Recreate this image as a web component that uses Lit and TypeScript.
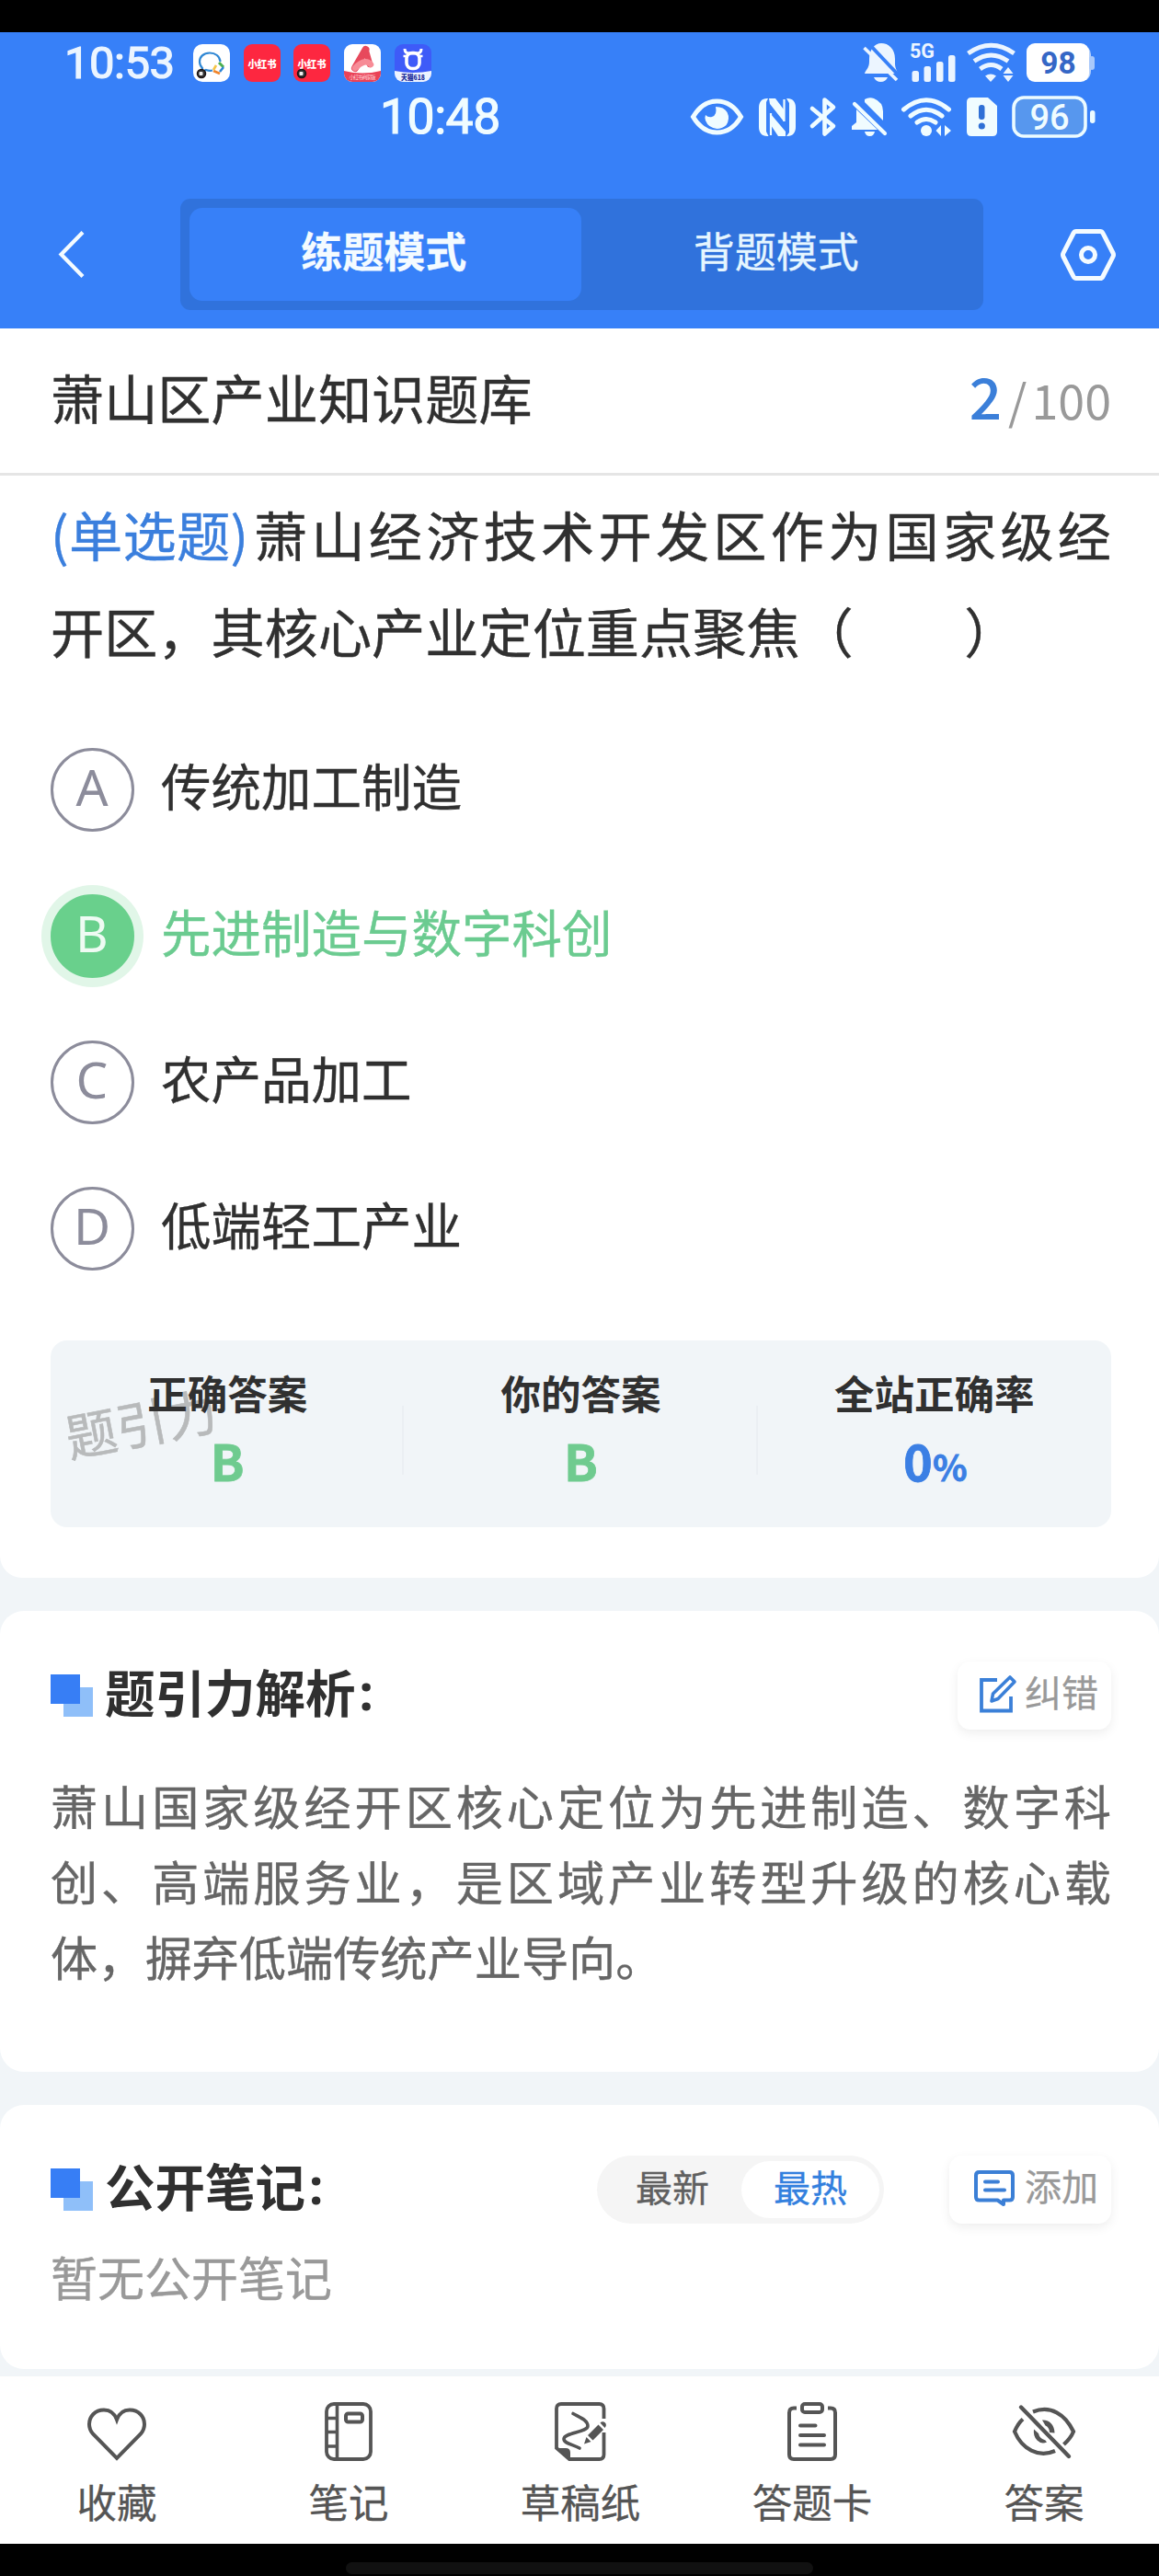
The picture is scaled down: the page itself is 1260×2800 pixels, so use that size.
import { LitElement, html, css, svg, TemplateResult } from "lit";
import { customElement, property } from "lit/decorators.js";
import { classMap } from "lit/directives/class-map.js";

const icon = (w: number, h: number, body: unknown) =>
  html`<svg width=${w} height=${h} viewBox="0 0 ${w} ${h}" fill="none">${body}</svg>`;

const BLUE = "#3780f8";

const bell = icon(39, 42, svg`
  <path d="M7 17C7 7 13 0 20 0C28 0 35 6 35 17V22C35 27 37 29 38 33H2C3 29 7 27 7 20Z" fill="#ecf5ff"/>
  <path d="M12 37H27C25.500 40.500 23 42 19.500 42C16 42 13.500 40.500 12 37Z" fill="#ecf5ff"/>
  <path d="M6 0L41 37" stroke=${BLUE} stroke-width="4"/>
  <path d="M1.500 5L37 40" stroke="#ecf5ff" stroke-width="3.600"/>`);

const signal = icon(50, 42, svg`
  <text x="0" y="16" font-family="Roboto, sans-serif" font-weight="700" font-size="22" textLength="27" lengthAdjust="spacingAndGlyphs" fill="#ecf5ff">5G</text>
  <g fill="#ecf5ff"><rect x="2.500" y="30" width="7.500" height="12" rx="2.500"/><rect x="15.500" y="25" width="7.500" height="17" rx="2.500"/><rect x="29" y="20" width="7.500" height="22" rx="2.500"/><rect x="42" y="13" width="7.500" height="29" rx="2.500"/></g>`);

const wifi = icon(53, 42, svg`
  <g stroke="#ecf5ff" stroke-width="4.800"><path d="M1.500 11Q26.500 -6.500 51.500 11"/><path d="M8 19.500Q26.500 6.500 45 19.500"/><path d="M14.500 28Q26.500 19 38 28"/></g>
  <path d="M20 35.500Q26 31.500 32 35.500L26 42Z M45 26L50.500 33H39.500Z M39.500 35H50.500L45 42Z" fill="#ecf5ff"/>`);

const battery98 = icon(74, 42, svg`
  <path d="M67 5Q70 8 70 12V30Q70 36 65 40Z" fill="#b5d1fb"/><rect x="68" y="14" width="6" height="15" rx="3" fill="#a9c9fb"/>
  <rect width="68" height="42" rx="9" fill="#fff"/>
  <text x="34.500" y="33" text-anchor="middle" font-family="Roboto, sans-serif" font-weight="700" font-size="33.500" fill="#3567c6">98</text>`);

const eyeStatus = icon(57, 40, svg`
  <path d="M2.500 20C9 9 18 3 28.500 3S48 9 54.500 20C48 31 39 37 28.500 37S9 31 2.500 20Z" stroke="#f0fcff" stroke-width="5"/>
  <path d="M27 9Q36 9 39.500 15Q43 22 38.500 29Q34 33 28.500 33Q19 32 16 24Q15 20 16 18Q19 21 23 20Q29 18 27 9Z" fill="#f0fcff"/>`);

const nfc = icon(40, 41, svg`
  <path d="M9 0C3 0 0 4 0 10V31C0 37 3 41 9 41H10.500L8 36V4L10 0Z M31 0H30L33 5V37L30 41H31C37 41 40 37 40 31V10C40 4 37 0 31 0Z" fill="#f0fcff"/>
  <path d="M11 0H18L27 12V25L12 6Z M13 17L29 36V41H21L13 29Z" fill="#f0fcff"/>
  <path d="M13 16V40M27.500 1V25" stroke="#f0fcff" stroke-width="2.200"/>`);

const bluetooth = icon(28, 42, svg`
  <path d="M2 12L25 31L15.500 39.500V2.500L25 10.500L2 31" stroke="#f0fcff" stroke-width="4.600" stroke-linejoin="round" stroke-linecap="round"/>`);

const bellRow2 = icon(38, 42, svg`
  <path d="M14 2Q19 -1 24 1Q34 5 34 15V25L14 5Z" fill="#f0fcff"/>
  <path d="M3 7L36 39" stroke="#f0fcff" stroke-width="4.200" stroke-linecap="round"/>
  <path d="M5 13L28 35H0V31L5 27Z" fill="#f0fcff"/><path d="M14 37H25Q24 42 19.500 42T14 37Z" fill="#f0fcff"/>`);

const wifiRow2 = icon(54, 42, svg`
  <g stroke="#f0fcff" stroke-width="5" stroke-linecap="round"><path d="M2.500 13Q27 -7.500 51.500 13"/><path d="M10 20Q27 6.500 44 20"/><path d="M17 27Q27 20 37 27"/></g>
  <circle cx="27" cy="36" r="6" fill="#f0fcff"/><path d="M43 30V42L37.500 36Z M47 30V42L54 36Z" fill="#f0fcff"/>`);

const sim = icon(33, 42, svg`
  <path d="M5 0H23L33 9V37Q33 42 28 42H5Q0 42 0 37V5Q0 0 5 0Z" fill="#f0fcff"/>
  <rect x="13" y="8" width="6.500" height="16" rx="3" fill="#2f70d6"/><circle cx="16.300" cy="31" r="3.600" fill="#2f70d6"/>`);

const battery96 = icon(91, 46, svg`
  <rect x="2" y="2" width="78" height="42" rx="11" fill="#5797ee" stroke="#ecfbff" stroke-width="3.600"/>
  <rect x="85" y="16" width="5.500" height="14" rx="2.700" fill="#ecfbff"/>
  <text x="41" y="36.500" text-anchor="middle" font-family="Roboto, sans-serif" font-weight="500" font-size="38" fill="#f0fcff">96</text>`);

const back = icon(28, 51, svg`<path d="M26 1.500L2.500 25.500L26 49.500" stroke="#f4fbff" stroke-width="4.200"/>`);

const settings = icon(60, 56, svg`
  <path d="M17 2.500H43Q45 2.500 46 4.500L57 26Q58 28 57 30L46 51.500Q45 53.500 43 53.500H17Q15 53.500 14 51.500L3 30Q2 28 3 26L14 4.500Q15 2.500 17 2.500Z" stroke="#f4fbff" stroke-width="5"/>
  <circle cx="30" cy="28" r="7.500" stroke="#f4fbff" stroke-width="5"/>`);

const marker = icon(46, 46, svg`<rect x="14" y="14" width="32" height="32" fill="#8fbff9"/><rect width="32" height="32" fill="#377ef5"/>`);

const edit = icon(40, 41, svg`
  <path d="M19 5H2V38.500H34V23" stroke="#3b80d8" stroke-width="3.800"/>
  <path d="M13 28L14.500 20L33 2L38 7L20 25.500Z" stroke="#3b80d8" stroke-width="3.600" stroke-linejoin="round"/>`);

const note = icon(44, 39, svg`
  <path d="M5.500 2H38.500Q42 2 42 5.500V29Q42 32.500 38.500 32.500H32V37L25.500 32.500H5.500Q2 32.500 2 29V5.500Q2 2 5.500 2Z" stroke="#3b7fd6" stroke-width="4" stroke-linejoin="round"/>
  <path d="M12 12.500H26M12 21.500H33" stroke="#3b7fd6" stroke-width="4" stroke-linecap="round"/>`);

const INK = "#555";

const heart = icon(66, 64, svg`
  <path d="M33 19C30 11 25 8.500 19 8.500C9 8.500 3 16 3 24C3 28 4 31 7 34.500L33 61L59 34.500C62 31 63 28 63 24C63 16 57 8.500 47 8.500C41 8.500 36 11 33 19Z" stroke=${INK} stroke-width="4"/>`);

const notebook = icon(52, 64, svg`
  <rect x="2" y="2" width="48" height="60" rx="8" stroke=${INK} stroke-width="3.800"/>
  <path d="M13.500 2V62M2 17.500H13M2 32.500H13M2 48H13" stroke=${INK} stroke-width="3.600"/>
  <rect x="23" y="12.500" width="18" height="9" rx="2.500" stroke=${INK} stroke-width="4"/>`);

const draft = icon(56, 64, svg`
  <path d="M53.500 18V7Q53.500 2 48.500 2H7Q2 2 2 7V50L16 62H48.500Q53.500 62 53.500 57V33" stroke=${INK} stroke-width="3.800"/>
  <path d="M2 50H12Q17 50 17 55V62Z" fill=${INK}/>
  <path d="M20 12.500C30 18 36 20 36 26C36 33 10 33 10 40C10 45 20 46 27 50" stroke=${INK} stroke-width="3.600" stroke-linecap="round"/>
  <path d="M36 36L47.500 24.500L53 30L41.500 41.500ZM49.500 22.500Q52 20 55 22.500Q57 25 54.500 28ZM34.500 38L39.500 43L32 45.500Z" fill=${INK}/>`);

const clipboard = icon(54, 64, svg`
  <path d="M10 6.500H7Q2 6.500 2 11.500V57Q2 62 7 62H47Q52 62 52 57V11.500Q52 6.500 47 6.500H44" stroke=${INK} stroke-width="4"/>
  <rect x="16" y="2" width="22" height="9" rx="3" stroke=${INK} stroke-width="4"/>
  <path d="M14 25.500H30.500M14 36H40M14 46.500H40" stroke=${INK} stroke-width="4" stroke-linecap="round"/>`);

const eyeOff = icon(70, 64, svg`
  <path d="M23 10.500C42 3 58 13 67 32C65 37 61 42 56.500 46M47 53C29 61 11 51 3 32C5 27 8 22 12 18.500" stroke=${INK} stroke-width="4.200"/>
  <path d="M33 19.500C41 19 46.500 25 46.500 33.500L41 33C41 29 39 26.500 36.500 25.500Z" fill=${INK}/>
  <path d="M24 29.500L29 34Q30 39.500 36.500 41.500L38 43.500Q32 46 27.500 41.500Q23 37 24 29.500Z" fill=${INK}/>
  <path d="M10 5.500L62 59" stroke=${INK} stroke-width="4.400" stroke-linecap="round"/>`);

const tile = (body: unknown) => icon(40, 41, body);
const redText = svg`<rect width="40" height="41" rx="9" fill="#fd2740"/>
  <text x="20" y="25.500" text-anchor="middle" font-family="'Noto Sans CJK SC', sans-serif" font-weight="900" font-size="11.500" textLength="31" lengthAdjust="spacingAndGlyphs" fill="#fff">小红书</text>`;
const badge = svg`<circle cx="9" cy="32" r="4.500" fill="#333" stroke="#1c1414" stroke-width="1.500"/><rect x="6.500" y="30" width="4" height="4" rx="1" fill="#eee"/>`;

const apps: TemplateResult[] = [
  tile(svg`<rect width="40" height="41" rx="10" fill="#fff"/>
    <path d="M29.500 19C29 13 24 9.500 18 9.500C11 9.500 7 14 7 19C7 22 8 24 10 26L9 30L14 28C17 29 19 29 21 28.500" stroke="#2f87d4" stroke-width="2.200"/>
    <path d="M28 20L33 25" stroke="#4caf50" stroke-width="3"/><path d="M33 25L29 30" stroke="#2c84d6" stroke-width="2.500"/><path d="M22 29L29 32" stroke="#f0852c" stroke-width="2.800"/><path d="M25 23L22 28" stroke="#f6c445" stroke-width="2.600"/>${badge}`),
  tile(redText),
  tile(svg`${redText}${badge}`),
  tile(svg`<clipPath id="r"><rect width="40" height="41" rx="9"/></clipPath><g clip-path="url(#r)"><rect width="40" height="41" fill="#fff"/>
    <path d="M0 29Q20 34 40 29V41H0Z" fill="#ea4257"/>
    <path d="M12 26L23.500 6" stroke="#e7495c" stroke-width="8" stroke-linecap="round"/><path d="M23.500 6L28 22" stroke="#e7495c" stroke-width="6.500" stroke-linecap="round"/><path d="M12 26Q23 15 29 22" stroke="#f78c97" stroke-width="6.500" stroke-linecap="round"/>
    <text x="20" y="38" text-anchor="middle" font-family="'Noto Sans CJK SC', sans-serif" font-size="5.800" textLength="29" fill="#ffd5da">小红书商家版</text></g>`),
  tile(svg`<clipPath id="t"><rect width="40" height="41" rx="9"/></clipPath><g clip-path="url(#t)"><rect width="40" height="41" fill="#3e5bf8"/>
    <path d="M0 29Q20 33 40 29V41H0Z" fill="#eef4ff"/>
    <path d="M11 5Q11 10 16 10H24Q29 10 29 5" stroke="#fff" stroke-width="3"/><rect x="13" y="9.500" width="14" height="17" rx="6" stroke="#fff" stroke-width="3.600"/><path d="M9.500 13H13M27 13H30.500" stroke="#fff" stroke-width="2.500"/>
    <text x="20" y="38.500" text-anchor="middle" font-family="'Noto Sans CJK SC', sans-serif" font-weight="800" font-size="7.500" textLength="26" lengthAdjust="spacingAndGlyphs" fill="#1d2c9a">天猫618</text></g>`),
];

@customElement("answer-option")
export class AnswerOption extends LitElement {
  @property() letter = "";
  @property() label = "";
  @property({ type: Boolean }) correct = false;

  static styles = css`
    :host { display: block; }
    .option { display: flex; align-items: center; gap: 29px; height: 91px; color: #303030; }
    .letter {
      box-sizing: border-box; width: 91px; height: 91px; flex: none;
      display: flex; align-items: center; justify-content: center;
      padding: 0 1px 8px 0; border: 3.500px solid #8c8c9b; border-radius: 50%;
      font: 400 55px/1 "Noto Sans", sans-serif; color: #8c8c9b;
    }
    .label { font-size: 54.500px; line-height: 91px; padding-bottom: 12px; -webkit-text-stroke: 0.400px currentColor; }
    .correct { color: #6bcb90; }
    .correct .letter { background: #69d08c; border-color: #69d08c; color: #effbf3; box-shadow: 0 0 0 10px #e1f6e8; }
  `;

  render() {
    return html`<div class=${classMap({ option: true, correct: this.correct })}>
      <span class="letter">${this.letter}</span><span class="label">${this.label}</span>
    </div>`;
  }
}

@customElement("app-root")
export class AppRoot extends LitElement {
  static styles = css`
    :host {
      display: block; width: 1260px; height: 2800px; overflow: hidden;
      background: #f1f5f8; color: #303030; white-space: nowrap;
      font-family: "Noto Sans CJK SC", sans-serif;
    }
    svg { display: block; flex: none; overflow: visible; }
    .page { display: flex; flex-direction: column; height: 2800px; }
    .cutout { height: 35px; background: #000; flex: none; }
    .header { height: 322px; background: #3780f8; flex: none; }
    .status { display: flex; align-items: center; height: 42px; padding: 12px 70px 0; }
    .status.second { padding: 15px 69px 0 0; height: 46px; }
    .clock { font: 400 49px/42px Roboto, sans-serif; color: #ecf5ff; width: 120px; margin-right: 20px; -webkit-text-stroke: 1.200px #ecf5ff; letter-spacing: -0.500px; padding-top: 2px; }
    .second .clock { font-size: 53.500px; color: #f0fcff; -webkit-text-stroke-color: #f0fcff; margin: 0 212px 0 auto; width: 126px; padding-top: 0; }
    .apps { display: flex; gap: 14.700px; margin-right: auto; }
    .indicators { display: flex; align-items: center; gap: 12px; }
    .second .indicators { gap: 16.500px; }
    .nav { display: flex; align-items: center; justify-content: space-between; padding: 0 47px 0 64px; margin-top: 66px; height: 121px; }
    .tabs { box-sizing: border-box; display: flex; width: 873px; height: 121px; padding: 10px; border-radius: 11px; background: #3072dc; margin-left: 19px; }
    .tab { box-sizing: border-box; flex: 1; height: 101px; line-height: 91px; padding-right: 3px; text-align: center; font-size: 45px; color: #e6f6ff; border-radius: 14px; -webkit-text-stroke: 0.300px currentColor; }
    .tab.active { background: #3780f8; font-weight: 700; color: #f4fbff; }

    .bank { box-sizing: border-box; height: 160px; flex: none; padding: 0 52px 9px 55px; border-bottom: 3px solid #e5e5e5; background: #fff; display: flex; align-items: center; justify-content: space-between; }
    .bank-name { font-size: 58.200px; line-height: 84px; -webkit-text-stroke: 0.400px currentColor; }
    .progress { display: flex; align-items: baseline; font-size: 52px; line-height: 84px; color: #999; }
    .current { font-size: 62px; font-weight: 500; color: #3b7fd9; margin-right: 7px; }
    .slash { margin-right: 5px; }

    .question { box-sizing: border-box; height: 1198px; flex: none; background: #fff; border-radius: 0 0 24px 24px; padding: 11px 52px 0 55px; }
    .stem { font-size: 58.200px; line-height: 104.500px; -webkit-text-stroke: 0.400px #303030; }
    .stem-line { display: flex; }
    .kind { color: #3b7fdd; width: 221px; letter-spacing: 0.300px; -webkit-text-stroke-color: #3b7fdd; }
    .blank { letter-spacing: 2px; }
    .fill { flex: 1; text-align-last: justify; }
    .options { display: flex; flex-direction: column; gap: 68px; margin-top: 76px; }
    .result { position: relative; display: grid; grid-template-columns: repeat(3, 1fr); height: 203px; margin-top: 76px; border-radius: 18px; background: #f1f5f8; }
    .stat { text-align: center; padding-top: 25px; font-weight: 700; position: relative; }
    .stat + .stat::before { content: ""; position: absolute; left: -2px; top: 71px; width: 2px; height: 75px; background: #ebeff3; }
    .stat-name { font-size: 43.500px; line-height: 64px; }
    .stat-value { font-size: 54px; line-height: 82px; color: #6fcb8f; -webkit-text-stroke: 0.800px currentColor; }
    .rate { color: #3b7fe4; padding-left: 2px; -webkit-text-stroke-color: #3b7fe4; }
    .percent { font-size: 39px; }
    .watermark { position: absolute; left: 15px; top: 48px; font-size: 55.500px; line-height: 80px; color: #b8babb; transform: rotate(-11deg); -webkit-text-stroke: 0.600px #b8babb; }

    .card { box-sizing: border-box; flex: none; background: #fff; border-radius: 26px; margin-top: 36px; padding: 55px 52px 0 55px; }
    .analysis { height: 501px; }
    .notes { height: 287px; }
    .card-head { display: flex; align-items: center; height: 74px; }
    .card-title { font-size: 54.500px; font-weight: 700; line-height: 74px; margin-left: 13px; margin-right: auto; padding-bottom: 10px; display: flex; }
    .colon { font-family: "Noto Sans", sans-serif; margin-left: 4px; }
    .pill { box-sizing: border-box; display: flex; align-items: center; gap: 9px; height: 74px; padding: 0 14px 3px 24px; border-radius: 14px; background: #fff; box-shadow: 0 4px 12px rgba(0, 0, 0, 0.070); font-size: 40px; color: #999; }
    .pill-text { line-height: 66px; padding-bottom: 7px; -webkit-text-stroke: 0.300px #999; }
    .pill.add { padding-left: 27px; gap: 11px; }
    .switch { box-sizing: border-box; display: flex; height: 74px; width: 312px; padding: 6px 5px; border-radius: 37px; background: #f5f5f5; margin-right: 71px; font-size: 40px; -webkit-text-stroke: 0.300px #606060; }
    .choice { flex: 1; text-align: center; line-height: 54px; height: 62px; border-radius: 31px; color: #606060; padding-left: 2px; }
    .choice.on { background: #fff; color: #3380de; padding: 0; -webkit-text-stroke-color: #3380de; }
    .prose { font-size: 51.200px; line-height: 82px; color: #666; margin-top: 41px; -webkit-text-stroke: 0.400px #666; }
    .prose-line { text-align-last: justify; }
    .prose-line.last { text-align-last: left; }
    .empty { font-size: 51px; line-height: 82px; color: #999; margin-top: 16px; -webkit-text-stroke: 0.400px #999; }

    .toolbar { box-sizing: border-box; display: grid; grid-template-columns: repeat(5, 252px); height: 182px; flex: none; margin-top: 8px; padding: 28px 0 0 1px; background: #fff; }
    .tool { display: flex; flex-direction: column; align-items: center; gap: 12px; font-size: 43.500px; line-height: 64px; color: #555; -webkit-text-stroke: 0.300px #555; }
    .gesture { display: flex; justify-content: center; height: 35px; flex: none; background: #000; }
    .bar { width: 508px; height: 13px; margin-top: 20px; border-radius: 7px; background: #111; }
  `;

  private options = [
    { letter: "A", label: "传统加工制造", correct: false },
    { letter: "B", label: "先进制造与数字科创", correct: true },
    { letter: "C", label: "农产品加工", correct: false },
    { letter: "D", label: "低端轻工产业", correct: false },
  ];

  private tools: [TemplateResult, string][] = [
    [heart, "收藏"],
    [notebook, "笔记"],
    [draft, "草稿纸"],
    [clipboard, "答题卡"],
    [eyeOff, "答案"],
  ];

  render() {
    return html`<div class="page">
      <div class="cutout"></div>
      <header class="header">
        <div class="status">
          <span class="clock">10:53</span>
          <div class="apps">${apps}</div>
          <div class="indicators">${bell}${signal}${wifi}${battery98}</div>
        </div>
        <div class="status second">
          <span class="clock">10:48</span>
          <div class="indicators">${eyeStatus}${nfc}${bluetooth}${bellRow2}${wifiRow2}${sim}${battery96}</div>
        </div>
        <nav class="nav">
          ${back}
          <div class="tabs"><div class="tab active">练题模式</div><div class="tab">背题模式</div></div>
          ${settings}
        </nav>
      </header>

      <div class="bank">
        <span class="bank-name">萧山区产业知识题库</span>
        <span class="progress"><span class="current">2</span><span class="slash">/</span><span>100</span></span>
      </div>

      <section class="question">
        <div class="stem">
          <div class="stem-line"><span class="kind">(单选题)</span><span class="fill">萧山经济技术开发区作为国家级经</span></div>
          <div class="stem-line"><span>开区，其核心产业定位重点聚焦（<span class="blank">　　</span>）</span></div>
        </div>
        <div class="options">
          ${this.options.map((o) => html`<answer-option .letter=${o.letter} .label=${o.label} .correct=${o.correct}></answer-option>`)}
        </div>
        <div class="result">
          <span class="watermark">题引力</span>
          <div class="stat"><div class="stat-name">正确答案</div><div class="stat-value">B</div></div>
          <div class="stat"><div class="stat-name">你的答案</div><div class="stat-value">B</div></div>
          <div class="stat"><div class="stat-name">全站正确率</div><div class="stat-value rate">0<span class="percent">%</span></div></div>
        </div>
      </section>

      <section class="card analysis">
        <div class="card-head">
          ${marker}<span class="card-title">题引力解析<span class="colon">:</span></span>
          <div class="pill">${edit}<span class="pill-text">纠错</span></div>
        </div>
        <div class="prose">
          <div class="prose-line">萧山国家级经开区核心定位为先进制造、数字科</div>
          <div class="prose-line">创、高端服务业，是区域产业转型升级的核心载</div>
          <div class="prose-line last">体，摒弃低端传统产业导向。</div>
        </div>
      </section>

      <section class="card notes">
        <div class="card-head">
          ${marker}<span class="card-title">公开笔记<span class="colon">:</span></span>
          <div class="switch"><span class="choice">最新</span><span class="choice on">最热</span></div>
          <div class="pill add">${note}<span class="pill-text">添加</span></div>
        </div>
        <div class="empty">暂无公开笔记</div>
      </section>

      <footer class="toolbar">
        ${this.tools.map(([glyph, name]) => html`<div class="tool">${glyph}<span>${name}</span></div>`)}
      </footer>
      <div class="gesture"><div class="bar"></div></div>
    </div>`;
  }
}
